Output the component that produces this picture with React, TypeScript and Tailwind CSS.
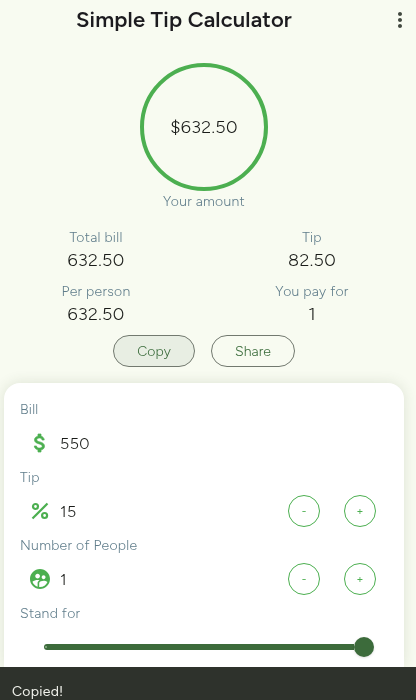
import type { ReactNode } from 'react';
import { useState } from 'react';
import { MdMoreVert, MdSupervisedUserCircle } from 'react-icons/md';

const DollarIcon = () => (
  <svg viewBox="0 0 24 24" className="size-6" fill="currentColor" stroke="currentColor" strokeWidth="0.7">
    <path d="M11.8 10.9c-2.27-.59-3-1.2-3-2.15 0-1.09 1.01-1.85 2.7-1.85 1.78 0 2.44.85 2.5 2.1h2.21c-.07-1.72-1.12-3.3-3.21-3.81V3h-3v2.16c-1.94.42-3.5 1.68-3.5 3.61 0 2.31 1.91 3.46 4.7 4.13 2.5.6 3 1.48 3 2.41 0 .69-.49 1.79-2.7 1.79-2.06 0-2.87-.92-2.98-2.1h-2.2c.12 2.19 1.76 3.42 3.68 3.83V21h3v-2.15c1.95-.37 3.5-1.5 3.5-3.55 0-2.84-2.43-3.81-4.7-4.4z" />
  </svg>
);

const PercentIcon = () => (
  <svg viewBox="0 0 24 24" className="size-6" fill="none" stroke="currentColor" strokeWidth="2.2">
    <circle cx="7.5" cy="7.5" r="2.5" />
    <circle cx="16.6" cy="16.5" r="2.5" />
    <path d="M19.5 4.5l-15 15" />
  </svg>
);

const Label = ({ children }: { children: ReactNode }) => (
  <div className="h-5 pt-px text-sm leading-5 font-[360] tracking-[0.27px] text-[#607d8b]">{children}</div>
);

const Stat = ({ label, value }: { label: string, value: string }) => (
  <div className="flex w-40 flex-col items-center">
    <Label>{label}</Label>
    <span className="h-6 pt-px text-[18px] leading-6 font-[320] tracking-[0.35px] text-[#1a1c19]">{value}</span>
  </div>
);

const RoundButton = ({ children, onClick }: { children: ReactNode, onClick: () => void }) => (
  <button
    className="flex size-8 items-center justify-center rounded-full border border-[#4caf50] pt-[3px] text-[11px] font-normal text-[#4caf50]"
    onClick={onClick}
  >
    {children}
  </button>
);

const Field = ({ label, icon, value, onStep }: { label: string, icon: ReactNode, value: number, onStep?: (step: number) => void }) => (
  <div>
    <Label>{label}</Label>
    <div className="flex h-12 items-center pr-3 pl-2">
      <span className="text-2xl text-[#4caf50]">{icon}</span>
      <span className="ml-2 flex-1 pt-px text-base font-[340] tracking-[0.5px] text-[#1a1c19]">{value}</span>
      {onStep && (
        <div className="flex gap-6">
          <RoundButton onClick={() => onStep(-1)}>-</RoundButton>
          <RoundButton onClick={() => onStep(1)}>+</RoundButton>
        </div>
      )}
    </div>
  </div>
);

function App() {
  const [tip, setTip] = useState(15);
  const [people, setPeople] = useState(1);
  const bill = 550;
  const tipAmount = bill * tip / 100;
  const total = bill + tipAmount;
  const perPerson = (total / people).toFixed(2);

  return (
    <div className="flex h-[700px] w-[416px] flex-col overflow-hidden bg-[#f8fbf1] font-['Figtree','Inter',sans-serif] font-light will-change-transform">
      <header className="flex h-10 shrink-0 items-center pl-[76px]">
        <h1 className="w-[216px] pb-0.5 text-center text-[22px] font-semibold tracking-[0.13px] whitespace-nowrap text-[#1c1b1f]">Simple Tip Calculator</h1>
        <button className="ml-auto pr-1 text-2xl text-[#424940]"><MdMoreVert /></button>
      </header>

      <main className="flex min-h-0 flex-1 flex-col pr-3 pl-1 pt-[23px]">
        <div className="flex flex-col items-center">
          <div className="flex size-32 items-center justify-center rounded-full border-4 border-[#4caf50] text-[18px] font-[320] tracking-[0.35px] text-[#1a1c19]">
            ${perPerson}
          </div>
          <Label>Your amount</Label>
        </div>

        <div className="mt-4 grid grid-cols-[160px_160px] justify-center gap-x-14 gap-y-2.5">
          <Stat label="Total bill" value={total.toFixed(2)} />
          <Stat label="Tip" value={tipAmount.toFixed(2)} />
          <Stat label="Per person" value={perPerson} />
          <Stat label="You pay for" value="1" />
        </div>

        <div className="mt-2.5 flex justify-center gap-4 text-sm font-[360] tracking-[0.1px] text-[#386a39]">
          <button className="h-8 w-[82px] rounded-full border border-[#72796f] bg-[#e8eee3] pt-0.5">Copy</button>
          <button className="h-8 w-[84px] rounded-full border border-[#72796f] pt-0.5">Share</button>
        </div>

        <section className="mt-4 min-h-0 flex-1 rounded-t-2xl bg-white p-4 pb-0 shadow-[0_0_14px_rgba(60,75,40,0.14)]">
          <Field label="Bill" icon={<DollarIcon />} value={bill} />
          <Field label="Tip" icon={<PercentIcon />} value={tip} onStep={(step) => setTip(Math.max(0, tip + step))} />
          <Field label="Number of People" icon={<MdSupervisedUserCircle />} value={people} onStep={(step) => setPeople(Math.max(1, people + step))} />
          <Label>Stand for</Label>
          <div className="flex h-12 items-center pl-6">
            <div className="flex h-1.5 w-[310px] items-center rounded-l-full bg-[#3c6b3b] pl-px">
              <span className="size-0.5 rounded-full bg-[#8fb28c]" />
            </div>
            <div className="size-5 rounded-full bg-[#3c6b3b] shadow-sm" />
          </div>
        </section>
      </main>

      <div className="z-10 h-[33px] shrink-0 bg-[#2e322c] pt-[15px] pl-3 text-sm leading-5 font-normal tracking-[0.25px] text-[#f0f1eb]">Copied!</div>
    </div>
  );
}

export default App;
